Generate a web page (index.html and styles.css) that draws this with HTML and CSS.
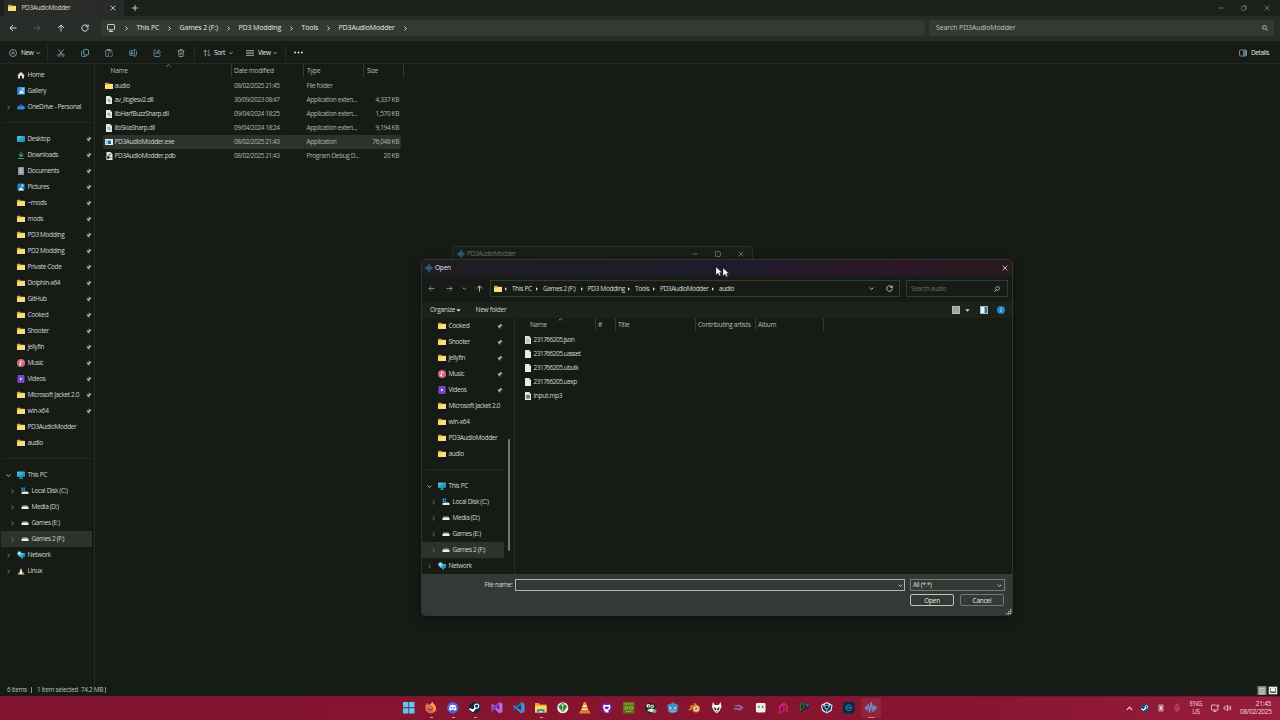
FILE: index.html
```html
<!DOCTYPE html>
<html lang="en">
<head>
<meta charset="utf-8">
<title>PD3AudioModder</title>
<link rel="stylesheet" href="styles.css">
</head>
<body>
<svg class="defs" aria-hidden="true">
  <defs>
    <linearGradient id="g-pc" x1="0" y1="0" x2="1" y2="1"><stop offset="0" stop-color="#4fd6e6"/><stop offset="1" stop-color="#1577a6"/></linearGradient>
    <linearGradient id="g-ff" x1="1" y1="0" x2="0" y2="1"><stop offset="0" stop-color="#ffd53d"/><stop offset=".5" stop-color="#ff7a2c"/><stop offset="1" stop-color="#e8313f"/></linearGradient>
  </defs>
  <symbol id="folder" viewBox="0 0 16 16"><path fill="#d9a93a" d="M0 3Q0 1.500 1.500 1.500H6l2 2h6.500Q16 3.500 16 5V13q0 1-1 1H1q-1 0-1-1z"/><path fill="#f8df7d" d="M0 5.500h6l2-1.500h8V13q0 1-1 1H1q-1 0-1-1z"/></symbol>
  <symbol id="home" viewBox="0 0 16 16"><path fill="#d9d5d0" d="M2 7l6-5 6 5v8h-4v-5H6v5H2z"/><path fill="none" stroke="#d98a62" stroke-width="2" d="M1 8.500L8 2l7 6.500"/></symbol>
  <symbol id="gallery" viewBox="0 0 16 16"><rect width="16" height="16" rx="2" fill="#2374b8"/><rect x="3" y="0" width="13" height="13" rx="2" fill="#3f9be0"/><path fill="#e5f4ff" d="M3 13l6-7 6 7z"/><circle cx="12" cy="4" r="1.700" fill="#fff"/></symbol>
  <symbol id="cloud" viewBox="0 0 16 16"><path fill="#2b8bdc" d="M3 13a3.300 3.300 0 0 1 0-6.500 5 5 0 0 1 9-1 3.800 3.800 0 0 1 1 7.500z"/><path fill="#135eae" d="M3 7q2-4 5-3.500 3 0 4 2.500-3 0-5 2z"/></symbol>
  <symbol id="desktop" viewBox="0 0 16 16"><rect y="2" width="16" height="12" rx="1.500" fill="url(#g-pc)"/><path d="M0 11h16v1.500q0 1.500-1.500 1.500h-13Q0 14 0 12.500z" fill="#2a9fb5"/></symbol>
  <symbol id="download" viewBox="0 0 16 16"><path fill="none" stroke="#2fa276" stroke-width="2.200" d="M8 1v10M3.500 7L8 11.500 12.500 7M2 15h12"/></symbol>
  <symbol id="document" viewBox="0 0 16 16"><rect x="2" width="12" height="16" rx="1.500" fill="#8b98a5"/><path stroke="#dbe3ea" stroke-width="1.500" d="M5 4h6M5 7.500h6M5 11h6"/></symbol>
  <symbol id="pictures" viewBox="0 0 16 16"><rect x="1" y="1" width="14" height="14" rx="2" fill="#2183c9"/><path fill="#e5f4ff" d="M2 15l6-7 6 7z"/><circle cx="11" cy="5" r="1.800" fill="#fff"/></symbol>
  <symbol id="music" viewBox="0 0 16 16"><circle cx="8" cy="8" r="8" fill="#cf6f78"/><path fill="none" stroke="#ffe9e9" stroke-width="1.500" d="M7 11V4l4 1.500"/><circle cx="6" cy="11" r="1.800" fill="#ffe9e9"/></symbol>
  <symbol id="videos" viewBox="0 0 16 16"><rect x="1" width="14" height="16" rx="2" fill="#7340c9"/><path fill="#efe4ff" d="M6 5l5 3-5 3z"/><path stroke="#a783ea" stroke-dasharray="1.500 1.500" d="M2.500 1v14M13.500 1v14"/></symbol>
  <symbol id="pc" viewBox="0 0 16 16"><rect y="1" width="16" height="11" rx="1.500" fill="url(#g-pc)"/><path fill="#27a0bd" d="M6 12h4v2h2v1.500H4V14h2z"/></symbol>
  <symbol id="drive" viewBox="0 0 16 16"><path fill="#a8adaf" d="M3 5h10l2 4H1z"/><rect x="1" y="8" width="14" height="4" rx="1" fill="#eef0f0"/></symbol>
  <symbol id="sysdrive" viewBox="0 0 16 16"><path fill="#2ba2df" d="M1 1h3v3H1zM5 1h3v3H5zM1 5h3v3H1zM5 5h3v3H5z"/><path fill="#6f7b80" d="M1 9l3-1h9l2 3z"/><rect x="1" y="10" width="14" height="4" rx="1" fill="#dce8ea"/></symbol>
  <symbol id="network" viewBox="0 0 16 16"><rect x="4" y="4" width="12" height="8" rx="1" fill="url(#g-pc)"/><path fill="#27a0bd" d="M8 12h4v3H8z"/><circle cx="5" cy="5" r="4.500" fill="#6cc4e4"/><path fill="#d8f3fa" d="M2 4l3-2 1 3-2 3z"/></symbol>
  <symbol id="linux" viewBox="0 0 16 16"><path fill="#28292a" d="M8 0q3 0 3 5l3 6-2 4H4l-2-4 3-6q0-5 3-5z"/><path fill="#f3f3ef" d="M8 3l3 8-1 4H6l-1-4z"/><path fill="#edbd45" d="M6 4h4L8 6.500zM1 15l2-4 4 4zM15 15l-2-4-4 4z"/></symbol>
  <symbol id="pin" viewBox="0 0 16 16"><path fill="#a3a8a3" d="M9 1l6 6-2 1-1-.3-3 3 .2 3.300-1.200 1-3.300-3.300L1 15l3.300-4L1 7.500l1-1 3.500.2 3-3L8 2.500z"/></symbol>
  <symbol id="chev-r" viewBox="0 0 8 8"><path fill="none" stroke="currentColor" stroke-width="1.500" d="M2.500 1l3 3-3 3"/></symbol>
  <symbol id="chev-d" viewBox="0 0 8 8"><path fill="none" stroke="currentColor" stroke-width="1.400" d="M1 2.500l3 3 3-3"/></symbol>
  <symbol id="tri" viewBox="0 0 8 8"><path fill="currentColor" d="M.5 2h7L4 6z"/></symbol>
  <symbol id="tri-r" viewBox="0 0 8 8"><path fill="currentColor" d="M2 .5v7L6 4z"/></symbol>
  <symbol id="left" viewBox="0 0 16 16"><path fill="none" stroke="currentColor" stroke-width="1.800" d="M15 8H2M8 2L2 8l6 6"/></symbol>
  <symbol id="right" viewBox="0 0 16 16"><path fill="none" stroke="currentColor" stroke-width="1.800" d="M1 8h13M8 2l6 6-6 6"/></symbol>
  <symbol id="up" viewBox="0 0 16 16"><path fill="none" stroke="currentColor" stroke-width="1.800" d="M8 15V2M2 8l6-6 6 6"/></symbol>
  <symbol id="reload" viewBox="0 0 16 16"><path fill="none" stroke="currentColor" stroke-width="1.900" d="M13.500 5A6.300 6.300 0 1 0 14.300 8M14.300 1v4.500H9.500"/></symbol>
  <symbol id="x" viewBox="0 0 10 10"><path stroke="currentColor" stroke-width="1.400" d="M1 1l8 8M9 1L1 9"/></symbol>
  <symbol id="plus" viewBox="0 0 10 10"><path stroke="currentColor" stroke-width="1.500" d="M5 0v10M0 5h10"/></symbol>
  <symbol id="min" viewBox="0 0 10 10"><path stroke="currentColor" stroke-width="1.400" d="M1 5h8"/></symbol>
  <symbol id="max" viewBox="0 0 10 10"><rect x="1" y="1" width="8" height="8" rx="1" fill="none" stroke="currentColor" stroke-width="1.400"/></symbol>
  <symbol id="restore" viewBox="0 0 10 10"><rect x="1" y="2.500" width="6.500" height="6.500" rx="1.500" fill="none" stroke="currentColor" stroke-width="1.300"/><path fill="none" stroke="currentColor" stroke-width="1.200" d="M3 1h4.500Q9 1 9 2.500V7"/></symbol>
  <symbol id="search" viewBox="0 0 16 16"><circle cx="6.500" cy="6.500" r="5" fill="none" stroke="currentColor" stroke-width="2.200"/><path stroke="currentColor" stroke-width="2.400" d="M10 10l5.500 5.500"/></symbol>
  <symbol id="monitor" viewBox="0 0 16 16"><rect x="1" y="1" width="14" height="10.500" rx="1.500" fill="none" stroke="currentColor" stroke-width="1.700"/><path stroke="currentColor" stroke-width="1.700" d="M8 12v3M4 15h8"/></symbol>
  <symbol id="newc" viewBox="0 0 16 16"><circle cx="8" cy="8" r="7" fill="none" stroke="#b6c0c0" stroke-width="1.400"/><path stroke="#79b8d2" stroke-width="1.400" d="M8 4.500v7M4.500 8h7"/></symbol>
  <symbol id="cut" viewBox="0 0 16 16"><path stroke="#adb3b3" stroke-width="1.500" d="M3 1l7.500 10M13 1L5.500 11"/><g fill="none" stroke="#579ec4" stroke-width="1.700"><circle cx="4" cy="12.500" r="2.300"/><circle cx="12" cy="12.500" r="2.300"/></g></symbol>
  <symbol id="copy" viewBox="0 0 16 16"><path fill="none" stroke="#579ec4" stroke-width="1.600" d="M5 4H3Q1 4 1 6v7q0 2 2 2h6q2 0 2-2"/><rect x="5.500" y="1" width="9.500" height="11" rx="2" fill="none" stroke="#86b6cd" stroke-width="1.600"/></symbol>
  <symbol id="paste" viewBox="0 0 16 16"><path fill="none" stroke="#9ca2a2" stroke-width="1.500" d="M6 15H3q-1.500 0-1.500-1.500v-10Q1.500 2 3 2h9q1.500 0 1.500 1.500V5M5 1h5v2H5z"/><rect x="7" y="6" width="7.500" height="9.300" rx="1.500" fill="none" stroke="#4b83a3" stroke-width="1.600"/></symbol>
  <symbol id="rename" viewBox="0 0 16 16"><path fill="none" stroke="#579ec4" stroke-width="1.500" d="M9 3H3Q1 3 1 5v6q0 2 2 2h6M13 3q2 0 2 2v6q0 2-2 2M11 1v14M9.500 1h3M9.500 15h3"/><path fill="none" stroke="#adb3b3" stroke-width="1.400" d="M3 11l2.500-6L8 11M4 9h3"/></symbol>
  <symbol id="share" viewBox="0 0 16 16"><path fill="none" stroke="#929999" stroke-width="1.500" d="M7 2H4Q2 2 2 4v9q0 2 2 2h8q2 0 2-2v-2"/><path fill="none" stroke="#579ec4" stroke-width="1.600" d="M5 10q1-5 6-5V1.500L15 6l-4 4V7.500Q7 7 5 10z"/></symbol>
  <symbol id="trash" viewBox="0 0 16 16"><path fill="none" stroke="#a9aeaa" stroke-width="1.500" d="M1 3.500h14M6 3V1h4v2M3 4l1 11h8l1-11M6.500 6.500v5M9.500 6.500v5"/></symbol>
  <symbol id="sort" viewBox="0 0 16 16"><path fill="none" stroke="#adb3ad" stroke-width="1.600" d="M4.500 15V2M1 5.500L4.500 2 8 5.500"/><path fill="none" stroke="#7e8c90" stroke-width="1.600" d="M11.500 1v13M8 10.500l3.500 3.500 3.500-3.500"/></symbol>
  <symbol id="lines" viewBox="0 0 16 16"><path stroke="#9da39d" stroke-width="1.700" d="M0 3h16M0 6.300h16M0 9.600h16M0 13h16"/></symbol>
  <symbol id="dots" viewBox="0 0 16 4"><g fill="#dde0dd"><circle cx="2" cy="2" r="1.700"/><circle cx="8" cy="2" r="1.700"/><circle cx="14" cy="2" r="1.700"/></g></symbol>
  <symbol id="details" viewBox="0 0 16 14"><rect x="1" y="1" width="14" height="12" rx="2" fill="none" stroke="#a3aeb0" stroke-width="1.500"/><path fill="#387890" stroke="#77b6cc" d="M9 2.500h4.500v9H9z"/></symbol>
  <symbol id="wave" viewBox="0 0 16 16"><path fill="none" stroke="#3f8fc0" stroke-width="1.400" d="M1 7v2M3.400 5.500v5M5.700 3v10M8 0v16M10.300 3v10M12.600 5.500v5M15 7v2"/></symbol>
  <symbol id="file" viewBox="0 0 12 16"><path fill="#e8ebe8" d="M0 1q0-1 1-1h7l4 4v11q0 1-1 1H1q-1 0-1-1z"/><path fill="#a9aea9" d="M8 0l4 4H8z"/></symbol>
  <symbol id="dll" viewBox="0 0 12 16"><use href="#file"/><circle cx="5.500" cy="8" r="2" fill="none" stroke="#727c7e" stroke-width="1.300"/><circle cx="8" cy="11" r="1.500" fill="none" stroke="#727c7e"/></symbol>
  <symbol id="json" viewBox="0 0 12 16"><use href="#file"/><path stroke="#949a95" stroke-width="1.100" d="M2 4h5M2 6.500h8M2 9h8M2 11.500h8M2 14h8"/></symbol>
  <symbol id="mp3" viewBox="0 0 12 16"><use href="#file"/><circle cx="6" cy="9.500" r="4" fill="#454b48"/><circle cx="6" cy="9.500" r="1.600" fill="#e2e5e2"/></symbol>
  <symbol id="exe" viewBox="0 0 16 16"><rect y="2" width="16" height="12" fill="#e8eef2"/><rect x="1" y="4" width="5" height="9" fill="#a8c7da"/><rect x="6" y="5" width="6" height="7" fill="#1971ae"/></symbol>
  <symbol id="pdb" viewBox="0 0 14 16"><path fill="#dfe3e0" d="M2 0h8l4 4v12H2z"/><circle cx="5" cy="11" r="3.500" fill="#252a27" stroke="#fff"/><path stroke="#38423f" stroke-width="1.600" d="M5 7l6-3M7 9l4 3"/></symbol>
</svg>

<main class="explorer">
  <header class="titlebar">
    <div class="tab"><svg class="i8"><use href="#folder"/></svg><span>PD3AudioModder</span><svg class="i6 tab-x"><use href="#x"/></svg></div>
    <svg class="i6 plus"><use href="#plus"/></svg>
    <div class="winbtns"><svg class="i6"><use href="#min"/></svg><svg class="i6"><use href="#restore"/></svg><svg class="i6"><use href="#x"/></svg></div>
  </header>
  <nav class="navbar">
    <div class="navbtns"><svg class="i8"><use href="#left"/></svg><svg class="i8 dim"><use href="#right"/></svg><svg class="i8"><use href="#up"/></svg><svg class="i8"><use href="#reload"/></svg></div>
    <div class="address">
      <svg class="i8"><use href="#monitor"/></svg><svg class="sep"><use href="#chev-r"/></svg>
      <span class="c1">This PC</span><svg class="sep"><use href="#chev-r"/></svg>
      <span class="c2">Games 2 (F:)</span><svg class="sep"><use href="#chev-r"/></svg>
      <span class="c3">PD3 Modding</span><svg class="sep"><use href="#chev-r"/></svg>
      <span class="c4">Tools</span><svg class="sep"><use href="#chev-r"/></svg>
      <span class="c5">PD3AudioModder</span><svg class="sep"><use href="#chev-r"/></svg>
    </div>
    <div class="searchbox"><span>Search PD3AudioModder</span><svg class="i6"><use href="#search"/></svg></div>
  </nav>
  <div class="toolbar">
    <div class="tool t-new"><svg class="i8"><use href="#newc"/></svg><span>New</span><svg class="i4"><use href="#chev-d"/></svg></div>
    <div class="tool t-icons"><svg class="i8"><use href="#cut"/></svg><svg class="i8"><use href="#copy"/></svg><svg class="i8"><use href="#paste"/></svg><svg class="i8"><use href="#rename"/></svg><svg class="i8"><use href="#share"/></svg><svg class="i8"><use href="#trash"/></svg></div>
    <div class="tool t-sort"><svg class="i8"><use href="#sort"/></svg><span>Sort</span><svg class="i4"><use href="#chev-d"/></svg></div>
    <div class="tool t-view"><svg class="i8"><use href="#lines"/></svg><span>View</span><svg class="i4"><use href="#chev-d"/></svg></div>
    <svg class="dots"><use href="#dots"/></svg>
    <div class="tool t-details"><svg class="i8"><use href="#details"/></svg><span>Details</span></div>
  </div>
  <div class="content">
    <aside class="tree">
      <div class="node"><svg class="i8"><use href="#home"/></svg>Home</div>
      <div class="node"><svg class="i8"><use href="#gallery"/></svg>Gallery</div>
      <div class="node"><svg class="ex"><use href="#chev-r"/></svg><svg class="i8"><use href="#cloud"/></svg>OneDrive - Personal</div>
      <hr>
      <div class="node"><svg class="i8"><use href="#desktop"/></svg>Desktop<svg class="pin"><use href="#pin"/></svg></div>
      <div class="node"><svg class="i8"><use href="#download"/></svg>Downloads<svg class="pin"><use href="#pin"/></svg></div>
      <div class="node"><svg class="i8"><use href="#document"/></svg>Documents<svg class="pin"><use href="#pin"/></svg></div>
      <div class="node"><svg class="i8"><use href="#pictures"/></svg>Pictures<svg class="pin"><use href="#pin"/></svg></div>
      <div class="node"><svg class="i8"><use href="#folder"/></svg>~mods<svg class="pin"><use href="#pin"/></svg></div>
      <div class="node"><svg class="i8"><use href="#folder"/></svg>mods<svg class="pin"><use href="#pin"/></svg></div>
      <div class="node"><svg class="i8"><use href="#folder"/></svg>PD3 Modding<svg class="pin"><use href="#pin"/></svg></div>
      <div class="node"><svg class="i8"><use href="#folder"/></svg>PD2 Modding<svg class="pin"><use href="#pin"/></svg></div>
      <div class="node"><svg class="i8"><use href="#folder"/></svg>Private Code<svg class="pin"><use href="#pin"/></svg></div>
      <div class="node"><svg class="i8"><use href="#folder"/></svg>Dolphin-x64<svg class="pin"><use href="#pin"/></svg></div>
      <div class="node"><svg class="i8"><use href="#folder"/></svg>GitHub<svg class="pin"><use href="#pin"/></svg></div>
      <div class="node"><svg class="i8"><use href="#folder"/></svg>Cooked<svg class="pin"><use href="#pin"/></svg></div>
      <div class="node"><svg class="i8"><use href="#folder"/></svg>Shooter<svg class="pin"><use href="#pin"/></svg></div>
      <div class="node"><svg class="i8"><use href="#folder"/></svg>jellyfin<svg class="pin"><use href="#pin"/></svg></div>
      <div class="node"><svg class="i8"><use href="#music"/></svg>Music<svg class="pin"><use href="#pin"/></svg></div>
      <div class="node"><svg class="i8"><use href="#videos"/></svg>Videos<svg class="pin"><use href="#pin"/></svg></div>
      <div class="node"><svg class="i8"><use href="#folder"/></svg>Microsoft Jacket 2.0<svg class="pin"><use href="#pin"/></svg></div>
      <div class="node"><svg class="i8"><use href="#folder"/></svg>win-x64<svg class="pin"><use href="#pin"/></svg></div>
      <div class="node"><svg class="i8"><use href="#folder"/></svg>PD3AudioModder</div>
      <div class="node"><svg class="i8"><use href="#folder"/></svg>audio</div>
      <hr>
      <div class="node"><svg class="ex open"><use href="#chev-d"/></svg><svg class="i8"><use href="#pc"/></svg>This PC</div>
      <div class="node sub"><svg class="ex"><use href="#chev-r"/></svg><svg class="i8"><use href="#sysdrive"/></svg>Local Disk (C:)</div>
      <div class="node sub"><svg class="ex"><use href="#chev-r"/></svg><svg class="i8"><use href="#drive"/></svg>Media (D:)</div>
      <div class="node sub"><svg class="ex"><use href="#chev-r"/></svg><svg class="i8"><use href="#drive"/></svg>Games (E:)</div>
      <div class="node sub selected"><svg class="ex"><use href="#chev-r"/></svg><svg class="i8"><use href="#drive"/></svg>Games 2 (F:)</div>
      <div class="node"><svg class="ex"><use href="#chev-r"/></svg><svg class="i8"><use href="#network"/></svg>Network</div>
      <div class="node"><svg class="ex"><use href="#chev-r"/></svg><svg class="i8"><use href="#linux"/></svg>Linux</div>
    </aside>
    <section class="files">
      <div class="cols head"><span>Name<svg class="sorted"><use href="#chev-d"/></svg></span><span>Date modified</span><span>Type</span><span>Size</span></div>
      <div class="cols"><span><svg class="fi"><use href="#folder"/></svg>audio</span><span>08/02/2025 21:45</span><span>File folder</span><span></span></div>
      <div class="cols"><span><svg class="fi"><use href="#dll"/></svg>av_libglesv2.dll</span><span>30/09/2023 08:47</span><span>Application exten...</span><span>4,337 KB</span></div>
      <div class="cols"><span><svg class="fi"><use href="#dll"/></svg>libHarfBuzzSharp.dll</span><span>09/04/2024 18:25</span><span>Application exten...</span><span>1,570 KB</span></div>
      <div class="cols"><span><svg class="fi"><use href="#dll"/></svg>libSkiaSharp.dll</span><span>09/04/2024 18:24</span><span>Application exten...</span><span>9,194 KB</span></div>
      <div class="cols selected"><span><svg class="fi"><use href="#exe"/></svg>PD3AudioModder.exe</span><span>08/02/2025 21:43</span><span>Application</span><span>76,048 KB</span></div>
      <div class="cols"><span><svg class="fi"><use href="#pdb"/></svg>PD3AudioModder.pdb</span><span>08/02/2025 21:43</span><span>Program Debug D...</span><span>20 KB</span></div>
    </section>
  </div>
  <footer class="status"><span class="s1">6 items</span><i></i><span class="s2">1 item selected&nbsp; 74.2 MB</span><i></i>
    <div class="viewmodes"><svg viewBox="0 0 10 10"><rect width="10" height="10" fill="#7d837d"/><path stroke="#dfe2df" d="M1.500 2.500h7M1.500 4.500h7M1.500 6.500h7M1.500 8.500h7"/></svg><svg viewBox="0 0 10 10"><rect x="1" y="1.500" width="8" height="7" fill="#555c56" stroke="#e8eae8" stroke-width="1.500"/><rect x="2.500" y="2.500" width="5" height="3.500" fill="#fff"/></svg></div>
  </footer>
</main>

<div class="backwin"><svg class="i8"><use href="#wave"/></svg><span>PD3AudioModder</span><div class="winbtns"><svg class="i6"><use href="#min"/></svg><svg class="i6"><use href="#max"/></svg><svg class="i6"><use href="#x"/></svg></div></div>

<section class="dialog">
  <header class="d-title"><svg class="i8"><use href="#wave"/></svg><span>Open</span><svg class="i6 d-x"><use href="#x"/></svg></header>
  <nav class="d-nav">
    <div class="d-navbtns"><svg class="i7"><use href="#left"/></svg><svg class="i7"><use href="#right"/></svg><svg class="i5"><use href="#chev-d"/></svg><svg class="i7 bright"><use href="#up"/></svg></div>
    <div class="d-address">
      <svg class="i8"><use href="#folder"/></svg><svg class="sep"><use href="#tri-r"/></svg>
      <span class="k1">This PC</span><svg class="sep"><use href="#tri-r"/></svg>
      <span class="k2">Games 2 (F:)</span><svg class="sep"><use href="#tri-r"/></svg>
      <span class="k3">PD3 Modding</span><svg class="sep"><use href="#tri-r"/></svg>
      <span class="k4">Tools</span><svg class="sep"><use href="#tri-r"/></svg>
      <span class="k5">PD3AudioModder</span><svg class="sep"><use href="#tri-r"/></svg>
      <span>audio</span>
      <svg class="i5 drop"><use href="#chev-d"/></svg><svg class="i7 rel"><use href="#reload"/></svg>
    </div>
    <div class="d-search"><span>Search audio</span><svg class="i6 flip"><use href="#search"/></svg></div>
  </nav>
  <div class="d-tools"><span class="org">Organize</span><svg class="i5"><use href="#tri"/></svg><span class="newf">New folder</span>
    <svg class="i8 vw" viewBox="0 0 16 16"><rect width="16" height="16" fill="#b5bab5"/><path stroke="#6e746f" d="M2 3h12M2 6h12M2 9h12M2 12h12"/></svg><svg class="i5 vd"><use href="#tri"/></svg><svg class="i8 pv" viewBox="0 0 16 16"><rect x="1" y="1" width="14" height="14" fill="#eef4f6" stroke="#aab4b4" stroke-width="2"/><path fill="#247fa6" d="M9 2h5v12H9z"/></svg><svg class="i8" viewBox="0 0 16 16"><circle cx="8" cy="8" r="8" fill="#2386cd"/><path stroke="#d9f0ff" stroke-width="1.800" d="M8 7v5M8 3.500v2"/></svg>
  </div>
  <div class="d-body">
    <aside class="tree">
      <div class="node"><svg class="i8"><use href="#folder"/></svg>Cooked<svg class="pin"><use href="#pin"/></svg></div>
      <div class="node"><svg class="i8"><use href="#folder"/></svg>Shooter<svg class="pin"><use href="#pin"/></svg></div>
      <div class="node"><svg class="i8"><use href="#folder"/></svg>jellyfin<svg class="pin"><use href="#pin"/></svg></div>
      <div class="node"><svg class="i8"><use href="#music"/></svg>Music<svg class="pin"><use href="#pin"/></svg></div>
      <div class="node"><svg class="i8"><use href="#videos"/></svg>Videos<svg class="pin"><use href="#pin"/></svg></div>
      <div class="node"><svg class="i8"><use href="#folder"/></svg>Microsoft Jacket 2.0</div>
      <div class="node"><svg class="i8"><use href="#folder"/></svg>win-x64</div>
      <div class="node"><svg class="i8"><use href="#folder"/></svg>PD3AudioModder</div>
      <div class="node"><svg class="i8"><use href="#folder"/></svg>audio</div>
      <hr>
      <div class="node"><svg class="ex open"><use href="#chev-d"/></svg><svg class="i8"><use href="#pc"/></svg>This PC</div>
      <div class="node sub"><svg class="ex"><use href="#chev-r"/></svg><svg class="i8"><use href="#sysdrive"/></svg>Local Disk (C:)</div>
      <div class="node sub"><svg class="ex"><use href="#chev-r"/></svg><svg class="i8"><use href="#drive"/></svg>Media (D:)</div>
      <div class="node sub"><svg class="ex"><use href="#chev-r"/></svg><svg class="i8"><use href="#drive"/></svg>Games (E:)</div>
      <div class="node sub selected"><svg class="ex"><use href="#chev-r"/></svg><svg class="i8"><use href="#drive"/></svg>Games 2 (F:)</div>
      <div class="node"><svg class="ex"><use href="#chev-r"/></svg><svg class="i8"><use href="#network"/></svg>Network</div>
    </aside>
    <div class="scroll"><div class="thumb"></div></div>
    <section class="d-files">
      <div class="d-cols"><span>Name<svg class="sorted"><use href="#chev-d"/></svg></span><span>#</span><span>Title</span><span>Contributing artists</span><span>Album</span></div>
      <div class="d-row"><svg class="fi"><use href="#json"/></svg>231766205.json</div>
      <div class="d-row"><svg class="fi"><use href="#file"/></svg>231766205.uasset</div>
      <div class="d-row"><svg class="fi"><use href="#file"/></svg>231766205.ubulk</div>
      <div class="d-row"><svg class="fi"><use href="#file"/></svg>231766205.uexp</div>
      <div class="d-row mp3"><svg class="fi"><use href="#mp3"/></svg>input.mp3</div>
    </section>
  </div>
  <footer class="d-foot">
    <span class="label">File name:</span>
    <div class="field name"><svg class="i5"><use href="#chev-d"/></svg></div>
    <div class="right">
      <div class="field"><span>All (*.*)</span><svg class="i5"><use href="#chev-d"/></svg></div>
      <div class="btns"><button class="primary">Open</button><button>Cancel</button></div>
    </div>
    <svg class="grip" viewBox="0 0 6 6"><path fill="#a6aba6" d="M4 0h1.500v1.500H4zM2 2h1.500v1.500H2zM4 2h1.500v1.500H4zM0 4h1.500v1.500H0zM2 4h1.500v1.500H2zM4 4h1.500v1.500H4z"/></svg>
  </footer>
</section>

<svg class="cursors" viewBox="0 0 14 12"><g fill="#fff" stroke="#222" stroke-width=".4"><path d="M1 1v8l2-2 1.200 2.800 1.400-.6L4.500 6.600H7z"/><path d="M8 2v8l2-2 1.200 2.800 1.400-.6-1.100-2.600H14z"/></g></svg>

<footer class="taskbar">
  <div class="apps">
    <div class="app"><svg viewBox="0 0 12 12"><path fill="#5cc9ef" d="M0 0h5.600v5.600H0zM6.400 0H12v5.600H6.400zM0 6.400h5.600V12H0zM6.400 6.400H12V12H6.400z"/></svg></div>
    <div class="app run"><svg viewBox="0 0 12 12"><path fill="url(#g-ff)" d="M2 1l1.500 2Q5 2 6 2.500 6 1 8 0q.5 2 2.500 3.500Q13 8 10 10.500 6 13.500 2 10.500-.5 8 .5 4z"/><circle cx="5.800" cy="6.800" r="2.500" fill="#7740b8"/><path fill="#ffb32e" d="M3 5l3 .5 2-.5-2 2z"/></svg></div>
    <div class="app run"><svg viewBox="0 0 12 12"><circle cx="6" cy="6" r="6" fill="#5360dd"/><path fill="#fff" d="M3.200 3.300Q6 2.300 8.800 3.300L10 8 8.200 9l-.6-1H4.400l-.6 1L2 8z"/><circle cx="4.600" cy="6" r=".9" fill="#5360dd"/><circle cx="7.400" cy="6" r=".9" fill="#5360dd"/></svg></div>
    <div class="app run"><svg viewBox="0 0 12 12"><circle cx="6" cy="6" r="6" fill="#0e2c48"/><path stroke="#fff" stroke-width="2" d="M.5 7l3.500 2 4-4"/><circle cx="8" cy="4.300" r="2.200" fill="#0e2c48" stroke="#fff" stroke-width="1.100"/><circle cx="4" cy="8.800" r="1.500" fill="#fff"/></svg></div>
    <div class="app"><svg viewBox="0 0 12 12"><path fill="#b76be4" d="M8.500 0L12 1.500v9L8.500 12 0 3l1.500-1L8.500 8z"/><path fill="#8343bd" d="M8.500 0v3.500L1.500 10 0 9V3l2 2z"/></svg></div>
    <div class="app"><svg viewBox="0 0 12 12"><path fill="#2c9be5" d="M8.500 0L12 1.500v9L8.500 12 0 4.500 1.300 3.300 8.500 9z"/><path fill="#1673b5" d="M8.500 0v3L1.300 8.700 0 7.500z"/></svg></div>
    <div class="app run"><svg viewBox="0 0 12 12"><path fill="#dda226" d="M0 1h4l1.500 1.500H12V11H0z"/><path fill="#fbd75a" d="M0 4h12v7H0z"/><path fill="#2c85c8" d="M2 11V8.500q0-1 1-1h6q1 0 1 1V11H8V9.500H4V11z"/></svg></div>
    <div class="app"><svg viewBox="0 0 12 12"><circle cx="6" cy="6" r="5.800" fill="#e6eee1"/><path fill="#317d37" d="M6 11L1.500 5 4 2l1 3V1h2v4l1-3 2.500 3z"/><path stroke="#fff" stroke-width=".8" d="M6 2v8"/></svg></div>
    <div class="app"><svg viewBox="0 0 12 12"><path fill="#f28c26" d="M5 0h2l3 9H2z"/><path fill="#f5eadb" d="M4.200 3h3.600l.7 2h-5zM3 7h6l.4 1.400H2.600z"/><path fill="#e87a1c" d="M1 9h10l1 3H0z"/></svg></div>
    <div class="app"><svg viewBox="0 0 12 12"><circle cx="6" cy="6" r="5.800" fill="#6a1e9b"/><path fill="#fff" d="M3 2.500l1.500.7h3L9 2.500q1.500 2.500.5 4.500-.7 1.200-2 1.300.5.500.5 2.700H4.500V9.500Q3 10 2.500 8.700l2-.2Q2.500 8 2.300 6 2 4 3 2.500z"/><path fill="#6a1e9b" d="M4 5q2-.8 4 0 .6 2.300-2 2.500Q3.400 7.300 4 5z"/></svg></div>
    <div class="app"><svg viewBox="0 0 12 12"><path fill="#55711b" d="M0 0h12v12H0z"/><path fill="none" stroke="#9fba4c" stroke-width=".9" d="M1 2h10M2 5h3v2.500H2zM7 5h3v2.500H7zM3 10h6"/></svg></div>
    <div class="app"><svg viewBox="0 0 12 12"><circle cx="5.500" cy="6" r="5.500" fill="#1e2520"/><circle cx="3.500" cy="4" r="2" fill="#f2f4ee"/><circle cx="7.500" cy="4.500" r="2" fill="#cbd1c4"/><path fill="#e8ebe2" d="M2 9q4-4 8-1l-2 3z"/><circle cx="3.800" cy="4.300" r=".8" fill="#1e2520"/><circle cx="7.300" cy="4.700" r=".8" fill="#1e2520"/><circle cx="10" cy="9.500" r="2" fill="#79b556"/></svg></div>
    <div class="app"><svg viewBox="0 0 12 12"><path fill="#498fc2" d="M1 3l1-1.500 1.500 1L5 .5h2l1.500 2 1.500-1L11 3l1 2-1 1v4q-5 3.500-10 0V6L0 5z"/><g fill="#b9d8ec"><circle cx="3.500" cy="6.500" r="1.200"/><circle cx="8.500" cy="6.500" r="1.200"/></g><path stroke="#b9d8ec" stroke-width=".7" d="M3 9.500h6"/></svg></div>
    <div class="app"><svg viewBox="0 0 12 12"><path fill="none" stroke="#ee8625" stroke-width="1.500" d="M0 8.500l5-4H1M5 1.500l4 3"/><circle cx="7.500" cy="7" r="4" fill="#ee8625"/><circle cx="7.500" cy="7" r="2.300" fill="#fff"/><circle cx="7.500" cy="7" r="1.300" fill="#2168b0"/></svg></div>
    <div class="app"><svg viewBox="0 0 12 12"><path fill="#f3f3f3" d="M2 0l2 3h4l2-3 1 5-2 4-3 3-3-3-2-4z"/><path fill="#171a1e" d="M3 5l2.500 2v1.500H4zM9 5L6.500 7v1.500H8zM5 10h2l-1 1z"/></svg></div>
    <div class="app"><svg viewBox="0 0 12 12"><path fill="none" stroke="#a95e99" stroke-width="1.500" d="M2 4h4M1 7h6M6 3l3 3-3 3"/><circle cx="9" cy="6" r="1.700" fill="#576ec4"/></svg></div>
    <div class="app"><svg viewBox="0 0 12 12"><rect x="1" y="1" width="10" height="10" rx="1.500" fill="#edf2e8"/><path stroke="#38493c" stroke-width="1.200" d="M4 4v2M8 4v2"/></svg></div>
    <div class="app"><svg viewBox="0 0 12 12"><path fill="#d91b79" d="M2 4l6-4v9l-4 3H2z"/><path fill="#7a1250" d="M3.500 6l3-2v5l-3 2z"/><path fill="none" stroke="#c94882" d="M8 2l2.500 2v7"/></svg></div>
    <div class="app"><svg viewBox="0 0 12 12"><path fill="#172625" d="M0 1h12L9 7 5 8l-3 4z"/><path fill="#375aa6" d="M6 1.500h5.500L8.500 6z"/><path fill="none" stroke="#6f8d48" stroke-width=".8" d="M1 2h4v4L2 9z"/></svg></div>
    <div class="app"><svg viewBox="0 0 12 12"><path fill="#eaf2f8" d="M6 0l6 3-1 6-5 3-5-3-1-6z"/><path fill="#17355d" d="M1 3l5 2 5-2-1 5-4 3-4-3z"/><path stroke="#8dbbe4" stroke-width="1.100" d="M3 4l3 4 3-4M6 8v3"/><path fill="#17355d" d="M3.500 2.500L6 1.300l2.500 1.200L6 3.700z"/></svg></div>
    <div class="app"><svg viewBox="0 0 12 12"><rect width="12" height="12" rx="1.500" fill="#092849"/><circle cx="6" cy="6" r="3" fill="none" stroke="#2e8eb4"/><path fill="none" stroke="#68b6ce" stroke-width=".8" d="M4 5.500q2 1.500 4 .3"/></svg></div>
    <div class="app active"><svg viewBox="0 0 12 12"><path fill="none" stroke="#667fc0" stroke-width="1.300" d="M0 7l1-2 1 4L3.500 2 5 11 6.500 0 8 10l1-7 1 5 1-3 1 2"/></svg></div>
  </div>
  <div class="tray">
    <svg class="i7 tchev" viewBox="0 0 8 8"><path fill="none" stroke="#f1dce1" stroke-width="1.300" d="M1 5.500l3-3 3 3"/></svg>
    <svg class="i8" viewBox="0 0 12 12"><circle cx="6" cy="6" r="6" fill="#1c4d78"/><path stroke="#fff" stroke-width="2" d="M.5 7l3.500 2 4-4"/><circle cx="8" cy="4.300" r="2" fill="#1c4d78" stroke="#fff" stroke-width="1.200"/></svg>
    <svg class="i8" viewBox="0 0 16 16"><rect x="4" y="2" width="8" height="12" fill="#9f6b75" stroke="#deb9c0" stroke-width="1.500"/><path fill="#f3dfe3" d="M6 5h4v6H6z"/></svg>
    <svg class="i8" viewBox="0 0 16 16"><rect x="5.500" y="0" width="5" height="9" rx="2.500" fill="none" stroke="#d9667f" stroke-width="1.500"/><path fill="none" stroke="#d9667f" stroke-width="1.500" d="M2.500 7v1.500q1 4 5.500 4t5.500-4V7M8 12.500V16"/></svg>
    <div class="lang">ENG<br>US</div>
    <svg class="i8" viewBox="0 0 16 16"><path fill="none" stroke="#f3dce1" stroke-width="1.500" d="M10 2H1v10h13V8M5 15h6M7 12v3M12 1v5h3V1"/></svg>
    <svg class="vol" viewBox="0 0 16 16"><path fill="none" stroke="#f3dce1" stroke-width="1.500" d="M1 6h3l4-4v12l-4-4H1zM10.500 5q2 3 0 6M13 3q3.500 5 0 10"/></svg>
    <div class="clock">21:45<br>08/02/2025</div>
  </div>
</footer>
</body>
</html>
```
FILE: styles.css
```css
* { box-sizing: border-box; }
html, body { margin: 0; width: 1280px; height: 720px; overflow: hidden; }
body { position: relative; display: flex; flex-direction: column; background: #171b16; color: #d6d9d6; font: 6.5px/10px "Open Sans", "Noto Sans", sans-serif; letter-spacing: -.37px; white-space: nowrap; }
svg { flex: none; display: block; overflow: visible; }
.defs { position: absolute; width: 0; height: 0; }
.i8 { width: 8px; height: 8px; }
.i7 { width: 7px; height: 7px; }
.i6 { width: 6px; height: 6px; }
.i5 { width: 5px; height: 5px; }
.i4 { width: 4px; height: 4px; }

.explorer { flex: none; height: 696px; display: flex; flex-direction: column; }
.titlebar { height: 16px; flex: none; display: flex; align-items: center; background: #1c201b; padding-left: 4px; }
.tab { width: 120px; height: 16px; display: flex; align-items: center; gap: 5.500px; padding: 0 8px 0 4px; background: linear-gradient(90deg, #2b2b27, #272b27); border-radius: 3px 3px 0 0; }
.tab-x { margin-left: auto; }
.plus { margin-left: 8px; }
.winbtns { margin-left: auto; display: flex; gap: 17px; color: #767b76; }
.titlebar .winbtns { padding-right: 10px; }
.navbar { height: 25px; flex: none; display: flex; align-items: center; background: #292d29; padding: 0 6px 1px 9px; font-size: 7px; letter-spacing: -.13px; color: #e6e8e6; }
.navbtns { width: 92px; display: flex; gap: 16px; }
.dim { color: #5b605b; }
.address { width: 824px; height: 16px; display: flex; align-items: center; background: #353934; border-radius: 2px; padding-left: 6px; }
.address .sep { width: 5px; height: 5px; }
.address > .i8 { margin-right: 8.500px; }
.address span { padding-left: 8px; }
.c1 { width: 38px; } .c2 { width: 54px; } .c3 { width: 58px; } .c4 { width: 32px; } .c5 { width: 72px; }
.searchbox { margin-left: 4px; width: 345px; height: 16px; background: #353934; border-radius: 2px; display: flex; align-items: center; justify-content: space-between; padding: 0 6px 0 7px; color: #bfc3bf; }
.toolbar { height: 23px; flex: none; display: flex; align-items: center; border-bottom: 1px solid #252a25; padding: 1px 0 0 9px; color: #e6e8e6; }
.tool { display: flex; align-items: center; height: 16px; }
.t-new { width: 38px; }
.t-new span { width: 14.500px; margin-left: 4px; }
.t-icons { width: 148px; border: solid #252a25; border-width: 0 1px; padding-left: 9px; gap: 16px; }
.t-sort { width: 42px; padding-left: 8px; }
.t-sort span { width: 15px; margin-left: 3px; }
.t-view { width: 49px; padding-left: 9px; border-right: 1px solid #252a25; }
.t-view span { width: 15px; margin-left: 4px; }
.dots { width: 9px; height: 3px; margin-left: 8px; }
.t-details { margin-left: auto; gap: 4px; padding-right: 11px; }
.content { flex: 1; min-height: 0; display: flex; }

.tree { width: 95px; flex: none; padding: 3px 2px 0 1px; border-right: 1px solid #272b27; }
.node { height: 16px; display: flex; align-items: center; padding-left: 5px; color: #d2d5d2; }
.node .i8 { margin: 0 2.500px 0 11px; }
.node .ex + .i8 { margin-left: 6px; }
.ex { width: 5px; height: 5px; color: #7b807b; }
.ex.open { color: #c9ccc9; }
.sub { padding-left: 9px; }
.pin { width: 6px; height: 6px; margin-left: auto; }
.tree hr { height: 16px; margin: 0 0 0 3px; border: 0; background: linear-gradient(#262a26, #262a26) 0 7px / 100% 1px no-repeat; }
.selected { background: #2e322d; }

.files { width: 310px; padding: 0 0 0 8px; }
.cols { display: grid; grid-template-columns: 128px 72px 60px 38px; width: 298px; height: 14px; align-items: center; color: #b0b4b0; }
.cols span { display: flex; align-items: center; padding-left: 3.500px; }
.cols span:nth-child(2) { padding-left: 3px; letter-spacing: -.46px; }
.cols span:first-child { padding-left: 2px; color: #d0d3d0; }
.cols:not(.head) span:last-child { justify-content: flex-end; padding: 0 2px 0 0; }
.fi { width: 8px; height: 8px; margin-right: 1.500px; }
.cols.head { width: 301px; grid-template-columns: 128.500px 72px 60px 40px; height: 13px; margin-bottom: 2px; }
.cols.head span { height: 13px; border-right: 1px solid #343934; color: #b6bab6; letter-spacing: -.25px; }
.cols.head span:nth-child(2) { padding-left: 2.500px; }
.cols.head span:first-child { padding-left: 7.500px; position: relative; }
.sorted { position: absolute; width: 5px; height: 5px; top: -1px; left: 63px; transform: scaleY(-1); color: #8f948f; }
.status { height: 12px; flex: none; display: flex; align-items: center; padding: 0 2px 0 7px; font-size: 6.400px; letter-spacing: -.27px; color: #bcc0bc; }
.status i { width: 1px; height: 6px; background: #8b908b; }
.s1 { width: 24px; } .s2 { width: 73px; padding-left: 5px; }
.viewmodes { margin-left: auto; display: flex; gap: 1px; }
.viewmodes svg { width: 10px; height: 9px; }

.backwin { position: absolute; left: 452px; top: 246px; width: 301px; height: 20px; border: 1px solid #292e29; border-radius: 4px 4px 0 0; background: #1a1e19; display: flex; align-items: flex-start; padding: 3px 8px 0 4px; color: #6a6f6a; }
.backwin span { margin: -1px 0 0 2px; }
.backwin .i6 { margin-top: 1px; }

.dialog { position: absolute; left: 421px; top: 259px; width: 592px; height: 357px; border: 1px solid #30342f; border-radius: 4px; overflow: hidden; background: #171b16; display: flex; flex-direction: column; box-shadow: 0 4px 12px #0006; }
.d-title { height: 16px; flex: none; display: flex; align-items: center; padding: 0 4px 1px 3px; background: linear-gradient(90deg, #1f1c21, #201b2b 55%, #2d1725 82%, #261a20); }
.d-title span { margin-left: 2px; color: #e4e6e4; letter-spacing: -.2px; }
.d-x { margin-left: auto; color: #d8d4d7; }
.d-nav { height: 26px; flex: none; display: flex; align-items: center; padding: 0 0 1px 6px; }
.d-navbtns { width: 61.500px; display: flex; align-items: center; gap: 10.500px; color: #9ca19c; }
.d-navbtns .i5 { margin: 0 -1.500px 0 -1px; }
.bright { color: #e2e4e2; }
.d-address, .d-search { height: 17px; border: 1px solid #343934; display: flex; align-items: center; }
.d-address { width: 410.500px; padding-left: 3.500px; color: #d9dcd9; letter-spacing: -.4px; }
.d-address .sep { width: 4px; height: 4px; margin-left: 2px; }
.d-address span { padding-left: 4px; }
.k1 { width: 25px; letter-spacing: -.3px; } .k2 { width: 38.500px; } .k3 { width: 41.500px; letter-spacing: -.3px; } .k4 { width: 19px; } .k5 { width: 53px; }
.drop { margin-left: auto; } .rel { margin: 0 6px 0 12px; }
.d-search { width: 102px; margin-left: 6px; padding: 0 7px 0 4px; justify-content: space-between; color: #666b66; }
.flip { transform: scaleX(-1); color: #b9bdb9; }
.d-tools { height: 16px; flex: none; display: flex; align-items: center; background: #1c211c; padding: 0 7px 0 8px; letter-spacing: -.25px; }
.org { width: 23.500px; }
.d-tools .i5 { margin-left: 2px; }
.d-tools .newf { margin-left: 15px; }
.d-tools .vw { margin-left: auto; } .d-tools .vd { margin: 0 10px 0 4.500px; } .pv { margin-right: 9.500px; }
.d-body { flex: 1; min-height: 0; display: flex; }
.d-body .tree { width: 83px; border: 0; padding: 0; }
.d-body .node { width: 82px; }
.d-body .pin { margin-right: 1px; }
.scroll { width: 10px; border-right: 1px solid #272b27; padding: 121px 0 0 3px; }
.thumb { width: 2px; height: 112px; background: #727772; border-radius: 1px; }
.d-files { flex: 1; }
.d-cols { display: grid; grid-template-columns: 80.500px 20px 80px 60px 68px; height: 13px; margin-bottom: 2px; color: #b6bab6; letter-spacing: -.3px; }
.d-cols span { border-right: 1px solid #343934; padding: 2px 0 0 2.500px; line-height: 9px; position: relative; }
.d-cols span:first-child { padding-left: 15px; }
.d-cols .sorted { left: 43px; }
.d-row { height: 14px; display: flex; align-items: center; padding-left: 9px; color: #d0d3d0; letter-spacing: -.5px; }
.d-row.mp3 { letter-spacing: -.3px; }
.d-foot { position: relative; height: 41px; flex: none; background: #353935; display: flex; align-items: flex-start; padding: 5px 7px 0 0; }
.label { width: 93.500px; padding: 1px 3px 0 0; text-align: right; letter-spacing: -.3px; }
.field { height: 12px; border: 1px solid #777c77; background: #353935; display: flex; align-items: center; justify-content: space-between; padding: 0 2px; }
.field.name { width: 389.500px; border-color: #afb3af; justify-content: flex-end; padding-right: 1px; }
.right { margin-left: 5.500px; width: 95px; }
.btns { display: flex; justify-content: space-between; margin-top: 3px; padding: 0 1px 0 0; }
button { width: 44px; height: 12px; padding: 0; border: 1px solid #737873; border-radius: 2px; background: #353935; color: #e8eae8; font: inherit; line-height: 9px; letter-spacing: -.2px; }
button.primary { border-color: #c1c5c1; }
.grip { position: absolute; right: 0; bottom: 0; width: 6px; height: 6px; }
.cursors { position: absolute; left: 715px; top: 266px; width: 14px; height: 12px; }

.taskbar { flex: none; height: 24px; position: relative; display: flex; background: linear-gradient(90deg, #801430, #86142f 40%, #87152f 75%, #991d3c); border-top: 1px solid #6f1930; }
.apps { margin-left: 398px; display: flex; }
.app { width: 22px; height: 22px; display: flex; align-items: center; justify-content: center; position: relative; }
.app svg { width: 11.500px; height: 11.500px; }
.app.run::after, .app.active::after { content: ""; position: absolute; bottom: 1px; width: 3px; height: 1px; background: #cf9aa8; }
.app.active::before { content: ""; position: absolute; inset: 1px 1px; background: #ffffff12; border-radius: 2px; }
.app.active::after { width: 7px; background: #e06b7d; }
.tray { height: 22px; margin-left: auto; display: flex; align-items: center; gap: 8px; padding-right: 9px; color: #f3dfe4; font-size: 6.400px; line-height: 8px; letter-spacing: -.23px; }
.tray .lang { width: 14px; text-align: center; }
.vol { width: 9px; height: 8px; margin-left: -4px; }
.clock { width: 31px; display: flow-root; text-align: right; }
```
